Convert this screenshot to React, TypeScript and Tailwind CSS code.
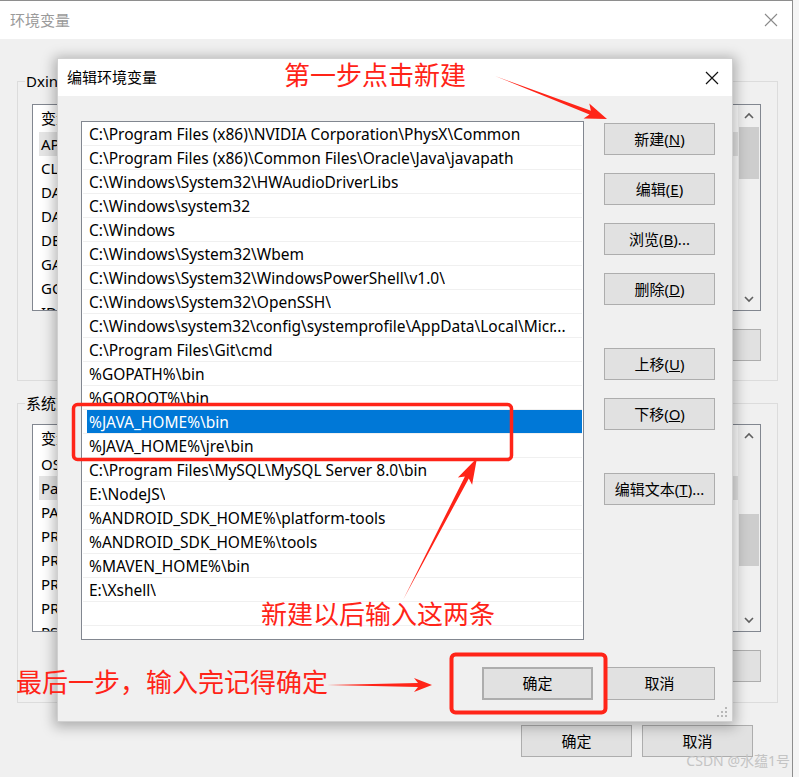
import React from "react";

const paths = [
  "C:\\Program Files (x86)\\NVIDIA Corporation\\PhysX\\Common",
  "C:\\Program Files (x86)\\Common Files\\Oracle\\Java\\javapath",
  "C:\\Windows\\System32\\HWAudioDriverLibs",
  "C:\\Windows\\system32",
  "C:\\Windows",
  "C:\\Windows\\System32\\Wbem",
  "C:\\Windows\\System32\\WindowsPowerShell\\v1.0\\",
  "C:\\Windows\\System32\\OpenSSH\\",
  "C:\\Windows\\system32\\config\\systemprofile\\AppData\\Local\\Micr...",
  "C:\\Program Files\\Git\\cmd",
  "%GOPATH%\\bin",
  "%GOROOT%\\bin",
  "%JAVA_HOME%\\bin",
  "%JAVA_HOME%\\jre\\bin",
  "C:\\Program Files\\MySQL\\MySQL Server 8.0\\bin",
  "E:\\NodeJS\\",
  "%ANDROID_SDK_HOME%\\platform-tools",
  "%ANDROID_SDK_HOME%\\tools",
  "%MAVEN_HOME%\\bin",
  "E:\\Xshell\\",
  "",
  "",
];

const userVars = ["APPDATA", "CLASSPATH", "DATAGRIP", "DATASPELL", "DEVECO_SDK_HOME", "GATEWAY", "GOPATH", "IDEA"];
const sysVars = ["OS", "Path", "PATHEXT", "PROCESSOR_ARCHITECTURE", "PROCESSOR_IDENTIFIER", "PROCESSOR_LEVEL", "PROCESSOR_REVISION", "PSModulePath"];

function WinButton({ children, className = "" }: { children: React.ReactNode; className?: string }) {
  return (
    <div
      className={
        "h-[32px] w-[111px] shrink-0 bg-[#e1e1e1] border border-[#adadad] text-[15px] text-black flex items-center justify-center " +
        className
      }
    >
      {children}
    </div>
  );
}

function Chevron({ up }: { up?: boolean }) {
  return (
    <svg width="12" height="8" viewBox="0 0 12 8">
      <polyline
        points={up ? "2,6 6,2 10,6" : "2,2 6,6 10,2"}
        fill="none"
        stroke="#606060"
        strokeWidth="1.6"
      />
    </svg>
  );
}

function ScrollBar({ thumbTop, thumbH }: { thumbTop: number; thumbH: number }) {
  return (
    <div className="w-[22px] h-full bg-[#f0f0f0] flex flex-col items-center">
      <div className="h-[22px] flex items-center justify-center">
        <Chevron up />
      </div>
      <div className="flex-1 w-full px-[1px]">
        <div className="w-full bg-[#cdcdcd]" style={{ marginTop: thumbTop, height: thumbH }} />
      </div>
      <div className="h-[22px] flex items-center justify-center">
        <Chevron />
      </div>
    </div>
  );
}

function VarList({ items, hl, thumbTop, h }: { items: string[]; hl: number; thumbTop: number; h: string }) {
  return (
    <div className={"border border-[#828790] bg-white flex " + h}>
      <div className="flex-1 flex flex-col overflow-hidden pl-[6px]">
        <div className="h-[27px] shrink-0 flex items-center pl-[2px] text-[15px]">变量</div>
        {items.map((v, i) => (
          <div
            key={i}
            className={"h-[24px] shrink-0 flex items-center pl-[2px] text-[15px] " + (i === hl ? "bg-[#e5e5e5]" : "")}
          >
            {v}
          </div>
        ))}
      </div>
      <ScrollBar thumbTop={thumbTop} thumbH={52} />
    </div>
  );
}

function arrow(tx: number, ty: number, hx: number, hy: number, headLen: number, headHalf: number, shaftHalf: number) {
  const dx = hx - tx;
  const dy = hy - ty;
  const len = Math.sqrt(dx * dx + dy * dy);
  const ux = dx / len;
  const uy = dy / len;
  const nx = -uy;
  const ny = ux;
  const bx = hx - ux * headLen;
  const by = hy - uy * headLen;
  const sx = bx + ux * 4;
  const sy = by + uy * 4;
  const p = (x: number, y: number) => `${x.toFixed(1)},${y.toFixed(1)}`;
  return [
    p(tx, ty),
    p(sx + nx * shaftHalf, sy + ny * shaftHalf),
    p(bx + nx * headHalf, by + ny * headHalf),
    p(hx, hy),
    p(bx - nx * headHalf, by - ny * headHalf),
    p(sx - nx * shaftHalf, sy - ny * shaftHalf),
  ].join(" ");
}

export default function App() {
  return (
    <div
      className="relative w-[799px] h-[777px] overflow-hidden bg-[#f0f0f0] text-black"
      style={{ fontFamily: '"Noto Sans", "Noto Sans CJK SC", sans-serif' }}
    >
      <div className="flex h-full">
        {/* background window: 环境变量 */}
        <div className="w-[793px] h-full shrink-0 border-r border-t border-[#8e8e8e] flex flex-col">
          <div className="h-[38px] bg-white flex items-center justify-between pl-[10px] pr-[14px]">
            <span className="text-[15px] text-[#9a9a9a]">环境变量</span>
            <svg width="14" height="14" viewBox="0 0 14 14">
              <path d="M1 1 L13 13 M13 1 L1 13" stroke="#8a8a8a" strokeWidth="1.1" />
            </svg>
          </div>
          <div className="flex-1 flex flex-col pl-[17px] pr-[14px] pt-[42px]">
            <div className="relative h-[300px] border border-[#dcdcdc] pt-[22px] pl-[14px] pr-[16px]">
              <span className="absolute -top-[12px] left-[7px] bg-[#f0f0f0] px-[1px] text-[15px] leading-[22px]">
                Dxinz 的用户变量(U)
              </span>
              <VarList items={userVars} hl={0} thumbTop={0} h="h-[207px]" />
              <div className="mt-[18px] flex justify-end gap-[10px]">
                <WinButton>新建(N)...</WinButton>
                <WinButton>编辑(E)...</WinButton>
                <WinButton className="w-[27px]">{""}</WinButton>
              </div>
            </div>
            <div className="relative mt-[22px] h-[300px] border border-[#dcdcdc] pt-[20px] pl-[14px] pr-[16px]">
              <span className="absolute -top-[12px] left-[7px] bg-[#f0f0f0] px-[1px] text-[15px] leading-[22px]">
                系统变量(S)
              </span>
              <VarList items={sysVars} hl={1} thumbTop={67} h="h-[208px]" />
              <div className="mt-[18px] flex justify-end gap-[10px]">
                <WinButton>新建(W)...</WinButton>
                <WinButton>编辑(I)...</WinButton>
                <WinButton className="w-[27px]">{""}</WinButton>
              </div>
            </div>
            <div className="mt-[22px] flex justify-end gap-[10px] pr-[25px]">
              <WinButton>确定</WinButton>
              <WinButton>取消</WinButton>
            </div>
          </div>
        </div>
        <div className="flex-1 bg-[#f5f5f5]" />
      </div>

      {/* front dialog: 编辑环境变量 */}
      <div className="absolute left-[57px] top-[58px] w-[676px] h-[664px] bg-[#f0f0f0] border border-[#d0d0d0] shadow-[0_2px_12px_3px_rgba(0,0,0,0.28)] flex flex-col">
        <div className="h-[37px] bg-white flex items-center justify-between pl-[9px] pr-[13px]">
          <span className="text-[15px]">编辑环境变量</span>
          <svg width="14" height="14" viewBox="0 0 14 14">
            <path d="M1 1 L13 13 M13 1 L1 13" stroke="#111" strokeWidth="1.2" />
          </svg>
        </div>
        <div className="flex-1 flex flex-col pl-[23px] pr-[17px] pt-[25px]">
          <div className="flex gap-[20px]">
            <div className="w-[503px] h-[519px] border border-[#828790] bg-white flex flex-col overflow-hidden">
              {paths.map((p, i) => (
                <div key={i} className="h-[24px] shrink-0 border-b border-[#f0f0f0] mx-[1px] flex">
                  {i === 12 ? (
                    <div className="ml-[4px] flex-1 bg-[#0078d7] text-white text-[15.5px] pl-[2px] pt-[2px] flex items-center whitespace-nowrap">
                      {p}
                    </div>
                  ) : (
                    <div className="pl-[6px] pt-[2px] text-[15.5px] flex items-center whitespace-nowrap overflow-hidden">{p}</div>
                  )}
                </div>
              ))}
            </div>
            <div className="w-[111px] flex flex-col pt-[2px]">
              <WinButton>
                新建(<span className="underline">N</span>)
              </WinButton>
              <WinButton className="mt-[18px]">
                编辑(<span className="underline">E</span>)
              </WinButton>
              <WinButton className="mt-[18px]">
                浏览(<span className="underline">B</span>)...
              </WinButton>
              <WinButton className="mt-[18px]">
                删除(<span className="underline">D</span>)
              </WinButton>
              <WinButton className="mt-[43px]">
                上移(<span className="underline">U</span>)
              </WinButton>
              <WinButton className="mt-[18px]">
                下移(<span className="underline">O</span>)
              </WinButton>
              <WinButton className="mt-[43px]">
                编辑文本(<span className="underline">T</span>)...
              </WinButton>
            </div>
          </div>
          <div className="mt-[27px] flex justify-end gap-[11px]">
            <WinButton className="h-[33px] border-2 border-[#0078d7]">确定</WinButton>
            <WinButton className="h-[33px]">取消</WinButton>
          </div>
        </div>
        <svg className="absolute right-[4px] bottom-[3px]" width="11" height="11" viewBox="0 0 11 11">
          <rect x="8" y="0" width="2" height="2" fill="#b8b8b8" />
          <rect x="4" y="4" width="2" height="2" fill="#b8b8b8" />
          <rect x="8" y="4" width="2" height="2" fill="#b8b8b8" />
          <rect x="0" y="8" width="2" height="2" fill="#b8b8b8" />
          <rect x="4" y="8" width="2" height="2" fill="#b8b8b8" />
          <rect x="8" y="8" width="2" height="2" fill="#b8b8b8" />
        </svg>
      </div>

      {/* annotations */}
      <svg className="absolute inset-0 pointer-events-none" width="799" height="777" viewBox="0 0 799 777">
        <polygon points={arrow(495, 76, 607, 119, 22, 8, 2)} fill="#ff2418" />
        <polygon points={arrow(403, 600, 477, 458, 26, 8, 2.2)} fill="#ff2418" />
        <polygon points={arrow(327, 685, 432, 685, 18, 7, 2)} fill="#ff2418" />
        <rect x="73.5" y="404.5" width="438" height="55" rx="4" fill="none" stroke="#ff2418" strokeWidth="3.5" />
        <rect x="451.5" y="654.5" width="154" height="58" rx="4" fill="none" stroke="#ff2418" strokeWidth="4" />
      </svg>
      <span
        className="absolute left-[284px] top-[61px] text-[26px] leading-[26px] text-[#ff2418] whitespace-nowrap"
        style={{ fontFamily: '"Noto Sans CJK SC", sans-serif' }}
      >
        第一步点击新建
      </span>
      <span
        className="absolute left-[261px] top-[600px] text-[26px] leading-[26px] text-[#ff2418] whitespace-nowrap"
        style={{ fontFamily: '"Noto Sans CJK SC", sans-serif' }}
      >
        新建以后输入这两条
      </span>
      <span
        className="absolute left-[16px] top-[668px] text-[26px] leading-[26px] text-[#ff2418] whitespace-nowrap"
        style={{ fontFamily: '"Noto Sans CJK SC", sans-serif' }}
      >
        最后一步，输入完记得确定
      </span>
      <span className="absolute right-[9px] bottom-[6px] text-[14px] text-[#c4c4c4] whitespace-nowrap">CSDN @水蕴1号</span>
    </div>
  );
}
